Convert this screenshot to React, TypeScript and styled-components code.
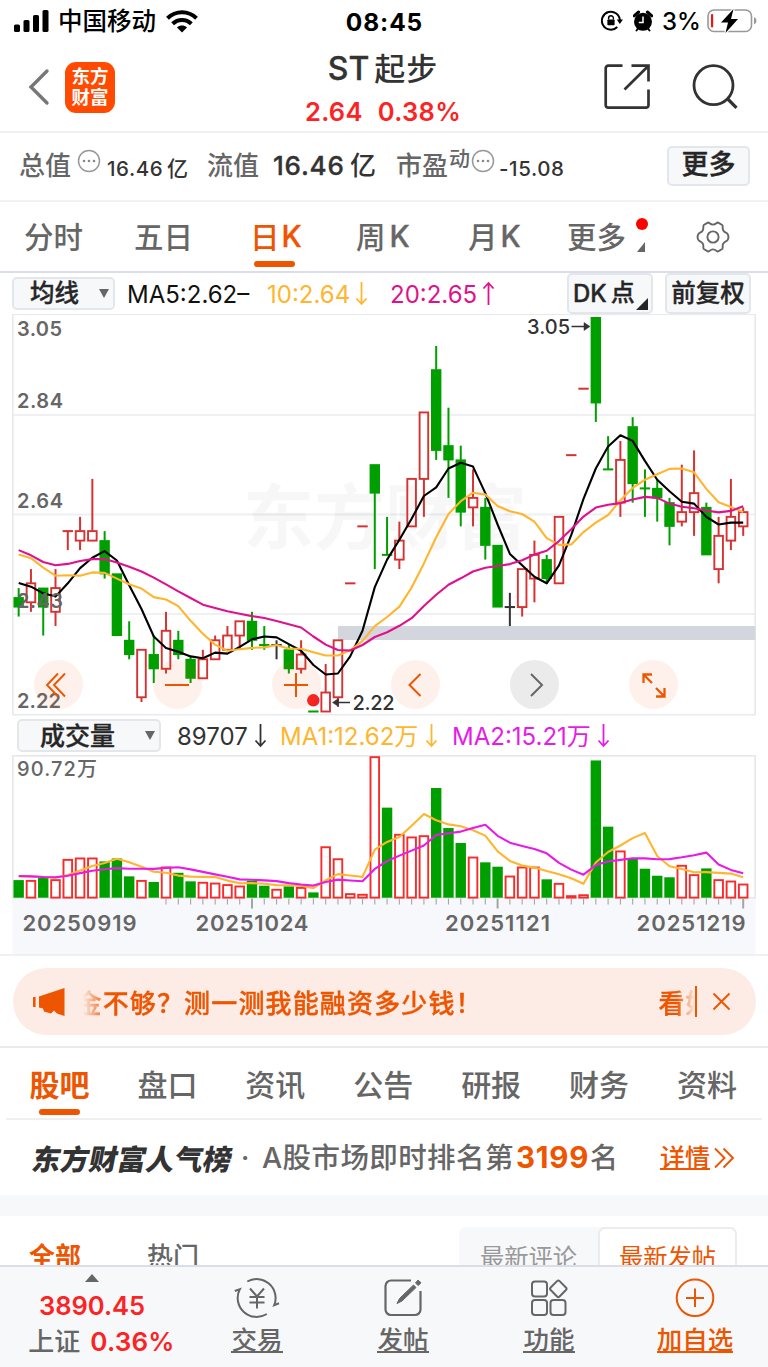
import React from 'react';
import styled, { createGlobalStyle, css } from 'styled-components';

const GlobalStyle = createGlobalStyle`
  * { box-sizing: border-box; }
  html, body { margin: 0; padding: 0; background: #fff; }
  body {
    width: 768px;
    height: 1367px;
    overflow: hidden;
    font-family: Inter, "Noto Sans CJK SC", sans-serif;
    color: #333;
    -webkit-font-smoothing: antialiased;
  }
  svg { display: block; flex: none; }
`;

const ORANGE = '#ee5500';
const GREY = '#666666';
const RED = '#fb2323';

const Screen = styled.div`
  width: 768px;
  height: 1367px;
  display: flex;
  flex-direction: column;
  overflow: hidden;
  background: #fff;
`;

interface LabelProps {
  $size: number;
  $weight?: number;
  $color?: string;
  $gap?: number;
  $spacing?: number;
  $drop?: number;
  $rise?: number;
  $width?: number;
  $heavy?: boolean;
}

const Label = styled.span<LabelProps>`
  flex: none;
  font-size: ${p => p.$size}px;
  line-height: 1.2;
  font-weight: ${p => p.$weight ?? 'inherit'};
  color: ${p => p.$color ?? 'inherit'};
  margin-left: ${p => p.$gap ?? 0}px;
  letter-spacing: ${p => p.$spacing ?? 0}px;
  padding-top: ${p => p.$drop ?? 0}px;
  padding-bottom: ${p => p.$rise ?? 0}px;
  white-space: nowrap;
  ${p => p.$heavy && css`-webkit-text-stroke: 0.35px currentColor;`}
  ${p => p.$width !== undefined && css`width: ${p.$width}px;`}
`;

/* ---------- status bar ---------- */

const StatusBar = styled.div`
  height: 43px;
  flex: none;
  display: grid;
  grid-template-columns: 1fr 90px 1fr;
  align-items: center;
  color: #000;
  padding: 0 10px 0 14px;
`;

const StatusSide = styled.div<{ $end?: boolean }>`
  display: flex;
  align-items: center;
  justify-content: ${p => (p.$end ? 'flex-end' : 'flex-start')};
`;

const StatusTime = styled.div`
  font-size: 24.5px;
  font-weight: 700;
  letter-spacing: 0.9px;
  padding-right: 3px;
  display: flex;
  justify-content: center;
  white-space: nowrap;
`;

const Spacer = styled.div<{ $w: number }>`
  flex: none;
  width: ${p => p.$w}px;
`;

/* ---------- header ---------- */

const Header = styled.header`
  height: 90px;
  flex: none;
  display: flex;
  align-items: center;
  justify-content: space-between;
  border-bottom: 2px solid #efefef;
  padding: 0 30px 0 28px;
`;

const HeaderSide = styled.div<{ $gap: number }>`
  width: 170px;
  display: flex;
  align-items: center;
  gap: ${p => p.$gap}px;

  &:last-child { justify-content: flex-end; }
`;

const AppLogo = styled.div`
  width: 50px;
  height: 51px;
  border-radius: 11px;
  background: #ff4a00;
  color: #fff;
  font-size: 18.5px;
  line-height: 21px;
  font-weight: 700;
  display: flex;
  flex-direction: column;
  align-items: center;
  justify-content: center;
`;

const TitleBlock = styled.div`
  display: flex;
  flex-direction: column;
  align-items: center;
  padding-top: 4px;
`;

const StockName = styled.div`
  display: flex;
  align-items: center;
  height: 44px;
  color: #333;
  font-weight: 500;
`;

const StockQuote = styled.div`
  display: flex;
  align-items: center;
  height: 40px;
  color: ${RED};
  font-size: 25.5px;
  font-weight: 600;
  letter-spacing: 0.3px;
  gap: 15px;
`;

/* ---------- statistics row ---------- */

const StatsRow = styled.section`
  height: 69px;
  flex: none;
  display: flex;
  align-items: center;
  padding: 0 18px 2px 19px;
  border-bottom: 2px solid #f1f1f1;
  font-weight: 500;
`;

const NoteMark = styled.span`
  flex: none;
  padding-bottom: 9px;
`;

const SoftButton = styled.button<{ $w: number; $h: number }>`
  flex: none;
  width: ${p => p.$w}px;
  height: ${p => p.$h}px;
  padding: 0;
  border: 2px solid #e3e6ea;
  border-radius: 5px;
  background: #f7f8fa;
  color: #262626;
  font-family: inherit;
  font-weight: 500;
  display: flex;
  align-items: center;
  justify-content: center;
  white-space: nowrap;
`;

/* ---------- period tabs ---------- */

const PeriodTabs = styled.nav`
  height: 71px;
  flex: none;
  display: flex;
  align-items: stretch;
  padding-left: 24px;
  border-bottom: 2px solid #dadee8;
`;

const PeriodTab = styled.div<{ $w: number; $active?: boolean }>`
  flex: none;
  width: ${p => p.$w}px;
  display: flex;
  align-items: center;
  position: relative;
  padding-bottom: 4px;
  font-size: 29.5px;
  font-weight: 500;
  color: ${p => (p.$active ? ORANGE : GREY)};

  ${p => p.$active && css`
    &::after {
      content: '';
      position: absolute;
      left: 4px;
      bottom: 4px;
      width: 41px;
      height: 6px;
      border-radius: 3px;
      background: ${ORANGE};
    }
  `}
`;

const SettingsTab = styled.div`
  display: flex;
  align-items: center;
`;

const NewDot = styled.i`
  position: absolute;
  left: 68.5px;
  top: 16px;
  width: 12px;
  height: 12px;
  border-radius: 50%;
  background: #ff0000;
`;

const TabCorner = styled.i`
  position: absolute;
  left: 70px;
  top: 40px;
  border-left: 8px solid transparent;
  border-bottom: 10px solid ${GREY};
`;

/* ---------- indicator bars ---------- */

const IndicatorBar = styled.div<{ $h: number; $left: number }>`
  height: ${p => p.$h}px;
  flex: none;
  display: flex;
  align-items: center;
  padding: 0 17px 0 ${p => p.$left}px;
`;

const Select = styled(SoftButton)`
  justify-content: space-between;

  &::after {
    content: '';
    border: 5.5px solid transparent;
    border-top: 9px solid ${GREY};
    border-bottom: 0;
    margin-right: 4px;
  }
`;

const CornerButton = styled(SoftButton)`
  position: relative;
  justify-content: flex-start;
  padding-left: 4px;

  &::after {
    content: '';
    position: absolute;
    right: 3px;
    bottom: 2px;
    border-left: 12px solid transparent;
    border-bottom: 12px solid #262626;
  }
`;

const Push = styled.div`
  flex: 1;
`;

/* ---------- charts ---------- */

const PriceChart = styled.div`
  position: relative;
  height: 402px;
  flex: none;
`;

const ChartControls = styled.div`
  position: absolute;
  left: 33.5px;
  right: 89.5px;
  bottom: 7px;
  display: flex;
  justify-content: space-between;
`;

const RoundButton = styled.button<{ $muted?: boolean }>`
  width: 49px;
  height: 49px;
  padding: 0;
  border: 0;
  border-radius: 50%;
  background: ${p => (p.$muted ? 'rgba(0,0,0,0.08)' : 'rgba(240,90,20,0.085)')};
  color: ${p => (p.$muted ? GREY : ORANGE)};
  display: flex;
  align-items: center;
  justify-content: center;
`;

const VolumeChart = styled.div`
  height: 201px;
  flex: none;
  border-bottom: 2px solid #eff0f1;
`;

/* ---------- promo banner ---------- */

const BannerWrap = styled.div`
  height: 92px;
  flex: none;
  padding: 12px 12.5px 0;
  border-bottom: 2px solid #e9eaec;
`;

const Banner = styled.div`
  height: 67px;
  border-radius: 34px;
  background: #fdece5;
  color: ${ORANGE};
  display: flex;
  align-items: center;
  padding: 0 24px 0 20px;
`;

const Ticker = styled.div`
  flex: none;
  width: 614px;
  margin-left: 16px;
  overflow: hidden;
  display: flex;
  font-size: 26px;
  font-weight: 500;
  letter-spacing: 1.15px;
  white-space: nowrap;
  -webkit-text-stroke: 0.35px currentColor;
  mask-image: linear-gradient(90deg, transparent 2px, #000 26px, #000 calc(100% - 18px), transparent 100%);
`;

const TickerText = styled.span<{ $shift: number; $w: number }>`
  flex: none;
  width: ${p => p.$w}px;
  margin-left: ${p => p.$shift}px;
`;

const BannerRule = styled.div`
  width: 2px;
  height: 31px;
  margin: 0 15px 0 0;
  background: ${ORANGE};
`;

/* ---------- content tabs ---------- */

const ContentTabs = styled.nav`
  height: 72px;
  flex: none;
  margin: 0 6px;
  padding: 0 25px 0 23.5px;
  display: flex;
  justify-content: space-between;
  border-bottom: 2px solid #efefef;
`;

const ContentTab = styled.div<{ $active?: boolean }>`
  width: 60px;
  height: 70px;
  padding-top: 19px;
  font-size: 30px;
  line-height: 36px;
  font-weight: ${p => (p.$active ? 700 : 500)};
  color: ${p => (p.$active ? ORANGE : GREY)};
  white-space: nowrap;

  ${p => p.$active && css`
    &::after {
      content: '';
      display: block;
      width: 41px;
      height: 6px;
      margin: 6px auto 0;
      border-radius: 3px;
      background: ${ORANGE};
    }
  `}
`;

const RankRow = styled.section`
  height: 75px;
  flex: none;
  display: flex;
  align-items: center;
  padding-left: 33px;
  color: ${GREY};
`;

const RankBrand = styled.span`
  flex: none;
  width: 205px;
  font-size: 28.5px;
  font-weight: 900;
  color: #333;
  transform: skewX(-11deg);
  white-space: nowrap;
`;

const Underlined = styled.span<{ $size: number }>`
  flex: none;
  font-size: ${p => p.$size}px;
  line-height: ${p => p.$size - 5}px;
  font-weight: 500;
  border-bottom: 2px solid currentColor;
  white-space: nowrap;
`;

const DetailLink = styled.div`
  display: flex;
  align-items: center;
  gap: 4px;
  color: ${ORANGE};

  ${Underlined} { margin-top: 3px; }
`;

const Band = styled.div`
  height: 21px;
  flex: none;
  background: #f7f8fa;
`;

const FilterRow = styled.section`
  height: 49px;
  flex: none;
  display: flex;
  align-items: flex-start;
  padding: 11px 31px 0 29px;
  overflow: hidden;
`;

const Segmented = styled.div`
  flex: none;
  display: flex;
  width: 278px;
  height: 60px;
  border-radius: 7px;
  background: #f7f8fa;
`;

const Segment = styled.div<{ $active?: boolean }>`
  width: 139px;
  height: 60px;
  padding-top: 13px;
  border: 2px solid ${p => (p.$active ? '#ececee' : 'transparent')};
  border-radius: 7px;
  background: ${p => (p.$active ? '#fff' : 'transparent')};
  color: ${p => (p.$active ? ORANGE : '#999')};
  font-size: 24.3px;
  line-height: 30px;
  text-align: center;
  white-space: nowrap;
`;

/* ---------- bottom bar ---------- */

const BottomBar = styled.footer`
  height: 102px;
  flex: none;
  display: flex;
  background: #f7f8fa;
  border-top: 2px solid #dadee6;
  color: ${GREY};
`;

const IndexBox = styled.div`
  width: 184px;
  display: flex;
  flex-direction: column;
  align-items: center;
  padding-top: 7px;
`;

const UpMark = styled.i`
  border: 7.5px solid transparent;
  border-top: 0;
  border-bottom: 8px solid ${GREY};
`;

const IndexLine = styled.div<{ $h: number; $indent?: number }>`
  height: ${p => p.$h}px;
  display: flex;
  align-items: center;
  padding-left: ${p => p.$indent ?? 0}px;
  color: ${GREY};
  font-weight: 500;
  white-space: nowrap;
`;

const NavItem = styled.div<{ $hot?: boolean }>`
  width: 146px;
  display: flex;
  flex-direction: column;
  align-items: center;
  gap: 12px;
  padding-top: 11px;
  color: ${p => (p.$hot ? ORANGE : GREY)};
`;

/* ---------- market data ---------- */

type Tone = 'up' | 'down' | 'flat';

// [tone, high, low, body top, body bottom, volume]; prices in cents, volume in 万
const DAYS: [Tone, number, number, number, number, number][] = [
  ['down', 248, 242, 246, 244, 11.3],
  ['up', 252, 243, 249, 245, 11.3],
  ['down', 248, 238, 248, 244, 13.3],
  ['up', 252, 240, 248, 243, 11.8],
  ['up', 260, 256, 260, 260, 24.8],
  ['up', 263, 256, 260, 258, 25.7],
  ['up', 271, 258, 260, 258, 25.7],
  ['down', 260, 250, 258, 251, 23.3],
  ['down', 251, 238, 251, 238, 25.2],
  ['down', 241, 233, 237, 234, 13.7],
  ['up', 235, 224, 235, 225, 11.3],
  ['down', 238, 228, 234, 231, 10.1],
  ['up', 243, 230, 239, 231, 19.9],
  ['down', 239, 233, 237, 234, 16.0],
  ['down', 233.6, 228, 233, 229, 10.5],
  ['up', 235, 229, 233, 229, 10.1],
  ['up', 238, 233, 237, 233, 9.6],
  ['up', 240, 235, 238, 235, 8.6],
  ['up', 241, 235, 241, 238, 7.7],
  ['down', 243, 235, 241, 237, 10.9],
  ['down', 240, 235, 236, 236, 7.7],
  ['flat', 237, 233, 236, 236, 5.6],
  ['down', 236, 230, 235, 231, 7.3],
  ['up', 237, 230, 234, 231, 6.8],
  ['down', 222, 222, 222, 222, 3.4],
  ['up', 232, 222, 226, 222, 32.9],
  ['up', 237, 223, 237, 225, 25.2],
  ['up', 249, 249, 249, 249, 2.8],
  ['up', 261, 261, 261, 261, 2.4],
  ['up', 274, 252, 274, 268, 90.72],
  ['down', 263, 255, 255, 255, 57.8],
  ['up', 262, 252, 258, 254, 40.9],
  ['up', 271, 261, 271, 261, 39.2],
  ['up', 285, 263, 285, 271, 40.0],
  ['down', 299, 275, 294, 277, 70.4],
  ['down', 286, 267, 278, 275, 44.7],
  ['down', 278, 261, 275, 264, 35.1],
  ['up', 273, 261, 267, 265, 26.3],
  ['down', 267, 254, 265, 257, 22.7],
  ['down', 257, 244, 257, 244, 19.9],
  ['flat', 247, 240, 244, 244, 14.1],
  ['up', 252, 242, 252, 244, 19.9],
  ['up', 258, 245, 255, 250, 19.9],
  ['down', 255, 249, 254, 250, 11.8],
  ['up', 263, 249, 263, 249, 9.4],
  ['up', 276, 276, 276, 276, 1.5],
  ['up', 290, 290, 290, 290, 2.1],
  ['down', 305, 283, 305, 287, 88.1],
  ['down', 280, 273, 273, 273, 45.6],
  ['up', 279, 263, 275, 266, 30.2],
  ['down', 284, 266, 282, 270, 25.2],
  ['down', 273, 263, 269, 269, 18.6],
  ['down', 271, 262, 269, 267, 14.1],
  ['down', 267, 257, 266, 261, 13.1],
  ['up', 274, 261, 264, 262, 21.0],
  ['up', 277, 259, 268, 264, 15.0],
  ['down', 266, 255, 265, 255, 18.8],
  ['up', 263, 249, 259, 252, 11.8],
  ['up', 271, 256, 263, 258, 10.9],
  ['up', 265, 259, 264, 261, 8.97],
];

// The gap-up day whose price body is green while its volume column is red.
const REVERSED_DAY = 29;

const dayX = (i: number) => 18.67 + i * 12.28;
const priceY = (cents: number) => 317.5 + (305 - cents) * 4.747;
const volumeY = (v: number) => 897.7 - v * 1.558;

const closes = DAYS.map((d, i) => (d[0] === 'up' && i !== REVERSED_DAY ? d[3] : d[4]));
const volumes = DAYS.map(d => d[5]);

const MA5_HEAD = [249.1, 248.3, 246.9, 246.2];
const MA10_HEAD = [255.1, 254.3, 252.3, 250.6, 250.7, 250.6, 251.3, 251.2, 250.0];
const MA20_HEAD = [
  256, 254.9, 253.5, 252.8, 253.1, 253.7, 254.1, 254.1, 253.4, 252.5,
  251.5, 250.2, 248.8, 247.3, 245.9, 244.5, 243.8, 243.1, 242.6,
];
const VOL5_HEAD = [13.7, 13.7, 13.3, 12.8];
const VOL10_HEAD = [13.9, 13.7, 13.3, 13.1, 14.1, 15.8, 17.3, 18.2, 19.0];

function averageLine(values: number[], head: number[], toY: (v: number) => number) {
  const span = head.length + 1;
  return values
    .map((_, i) => {
      const v = i < head.length
        ? head[i]
        : values.slice(i - span + 1, i + 1).reduce((a, b) => a + b, 0) / span;
      return `${dayX(i).toFixed(1)},${toY(v).toFixed(1)}`;
    })
    .join(' ');
}

const TONES: Record<Tone, string> = { up: '#d63232', down: '#009f00', flat: '#333333' };

function Candle({ index }: { index: number }) {
  const [rawTone, high, low, top, bottom] = DAYS[index];
  const tone = index === REVERSED_DAY ? 'down' : rawTone;
  const color = TONES[tone];
  const x = dayX(index);
  const yTop = priceY(top);
  const yBottom = priceY(bottom);
  const wickTop = priceY(high);
  const wickBottom = priceY(low);
  return (
    <g stroke={color} strokeWidth={2} fill="none">
      {high > top && <path d={`M${x} ${wickTop}V${yTop}`} />}
      {low < bottom && <path d={`M${x} ${yBottom}V${wickBottom}`} />}
      {top === bottom && <path d={`M${x - 5.2} ${yTop}H${x + 5.2}`} />}
      {top > bottom && tone === 'down' && (
        <rect x={x - 5.2} y={yTop - 0.5} width={10.4} height={yBottom - yTop + 1} fill={color} stroke="none" />
      )}
      {top > bottom && tone === 'up' && (
        <rect x={x - 4.3} y={yTop} width={8.6} height={yBottom - yTop} strokeWidth={1.9} />
      )}
    </g>
  );
}

function PriceSvg() {
  return (
    <svg width="768" height="402" viewBox="0 314 768 402" fontFamily='Inter, "Noto Sans CJK SC", sans-serif'>
      <g stroke="#eef0f4" strokeWidth="2">
        <path d="M13 415H755M13 514.5H755M13 614H755" />
      </g>
      <rect x="12.8" y="314.3" width="742.4" height="400.4" fill="none" stroke="#e9eaed" strokeWidth="1.6" />
      <text x="243" y="543" fontSize="71" fontWeight="700" fill="#000" fillOpacity="0.03" textLength="284">东方财富</text>
      <rect x="338" y="626" width="417.5" height="14" fill="#d3d6dc" />
      {DAYS.map((_, i) => <Candle key={i} index={i} />)}
      <g fill="none" strokeWidth="2.1" strokeLinejoin="round">
        <polyline points={averageLine(closes, MA5_HEAD, priceY)} stroke="#000" />
        <polyline points={averageLine(closes, MA10_HEAD, priceY)} stroke="#ffb52e" />
        <polyline points={averageLine(closes, MA20_HEAD, priceY)} stroke="#e0118a" />
      </g>
      <circle cx="313.3" cy="700.3" r="6.2" fill="#f52222" />
      <g fill={GREY} fontSize="20" fontWeight="600">
        <text x="17" y="336.3" textLength="45">3.05</text>
        <text x="17" y="407.8" textLength="46">2.84</text>
        <text x="17" y="508.3" textLength="46">2.64</text>
        <text x="17" y="607.8" textLength="46">2.43</text>
        <text x="17" y="707.8" textLength="44">2.22</text>
      </g>
      <g fill="#333" fontSize="20" fontWeight="500">
        <text x="527" y="333.8" textLength="43">3.05</text>
        <text x="352.5" y="709.8" textLength="42">2.22</text>
      </g>
      <g stroke="#333" strokeWidth="1.5" fill="#333">
        <path d="M571.5 326.5H586" />
        <path d="M584 322.500L590 326.5L584 330.500Z" strokeWidth="0.5" />
        <path d="M350 702.5H336" />
        <path d="M338.5 698.500L332.5 702.5L338.5 706.500Z" strokeWidth="0.5" />
      </g>
    </svg>
  );
}

function VolumeSvg() {
  return (
    <svg width="768" height="199" viewBox="0 755 768 199" fontFamily='Inter, "Noto Sans CJK SC", sans-serif'>
      <rect x="12.5" y="898" width="743" height="56" fill="#f7f8fb" />
      <rect x="12.8" y="755.8" width="742.4" height="142" fill="none" stroke="#e6e7ea" strokeWidth="1.6" />
      <text x="17" y="775.5" fontSize="20" fontWeight="500" fill={GREY} textLength="80">90.72万</text>
      {DAYS.map(([tone, , , , , volume], i) => {
        const x = dayX(i);
        const y = volumeY(volume);
        return tone === 'down' ? (
          <rect key={i} x={x - 5.2} y={y} width={10.4} height={897.7 - y} fill="#009f00" />
        ) : (
          <rect key={i} x={x - 4.3} y={y + 0.8} width={8.6} height={Math.max(896.8 - y, 0.6)} fill="none" stroke="#f72b2b" strokeWidth="1.9" />
        );
      })}
      <g fill="none" strokeWidth="2.1" strokeLinejoin="round">
        <polyline points={averageLine(volumes, VOL5_HEAD, volumeY)} stroke="#ffb52e" />
        <polyline points={averageLine(volumes, VOL10_HEAD, volumeY)} stroke="#e71be7" />
      </g>
      <g stroke="#a5a5a5">
        {DAYS.map((_, i) => {
          if (i < 12) return null;
          const major = i % 20 === 19;
          return <path key={i} d={`M${dayX(i)} 898.5V${major ? 908.5 : 904.5}`} strokeWidth={major ? 2 : 1.1} />;
        })}
      </g>
      <g fill={GREY} fontSize="22" fontWeight="600">
        <text x="22.5" y="930.5" textLength="114">20250919</text>
        <text x="195.5" y="930.5" textLength="113">20251024</text>
        <text x="445" y="930.5" textLength="105">20251121</text>
        <text x="636.5" y="930.5" textLength="109">20251219</text>
      </g>
    </svg>
  );
}

/* ---------- icons ---------- */

const SignalIcon = () => (
  <svg width="35" height="23" viewBox="0 0 35 23" fill="#000">
    <rect x="0" y="14.5" width="6" height="7.5" rx="1.6" />
    <rect x="9.5" y="10" width="6" height="12" rx="1.6" />
    <rect x="19" y="5" width="6" height="17" rx="1.6" />
    <rect x="28.5" y="0" width="6" height="22" rx="1.6" />
  </svg>
);

const WifiIcon = () => (
  <svg width="32" height="23" viewBox="0 0 32 23" fill="none" stroke="#000" strokeWidth="4">
    <path d="M1.5 8.2C9.8 0.2 22.2 0.2 30.5 8.2" />
    <path d="M6.6 13.8C12 8.6 20 8.6 25.4 13.8" />
    <path d="M16 22.4L11 17.4C13.8 15 18.2 15 21 17.4Z" fill="#000" stroke="none" />
  </svg>
);

const RotationLockIcon = () => (
  <svg width="22" height="22" viewBox="0 0 22 22" fill="none" stroke="#000" strokeWidth="2">
    <path d="M18.9 10.5A9 9 0 1 0 16.3 17" />
    <path d="M15.8 9.6H22L18.8 14Z" fill="#000" stroke="none" />
    <path d="M7.6 9.5V8.2A2.4 2.4 0 0 1 12.4 8.2V9.5" strokeWidth="1.4" />
    <rect x="6.4" y="9.4" width="7.2" height="5.8" rx="0.8" fill="#000" stroke="none" />
  </svg>
);

const AlarmIcon = () => (
  <svg width="20" height="22" viewBox="0 0 20 22">
    <path d="M1.2 5.8L5.6 2M18.8 5.8L14.4 2" stroke="#000" strokeWidth="3" strokeLinecap="round" />
    <path d="M3.5 20.5L5.5 18M16.5 20.5L14.5 18" stroke="#000" strokeWidth="2" strokeLinecap="round" />
    <circle cx="10" cy="11.8" r="9" fill="#000" />
    <path d="M10 6.6V12.4H5.8" fill="none" stroke="#fff" strokeWidth="1.5" />
  </svg>
);

const BatteryIcon = () => (
  <svg width="51" height="26" viewBox="0 0 51 26">
    <rect x="1" y="2" width="43.5" height="21.5" rx="6" fill="none" stroke="#999" strokeWidth="1.6" />
    <path d="M47 9C50.2 10.3 50.2 15.1 47 16.5Z" fill="#999" />
    <rect x="4" y="6" width="2.2" height="13.4" rx="1" fill="#f01414" />
    <path d="M26.5 1L14 14.5H21L18.5 25L31 11H24Z" fill="#000" stroke="#fff" strokeWidth="2.4" paintOrder="stroke" />
  </svg>
);

const BackIcon = () => (
  <svg width="22" height="38" viewBox="0 0 22 38" fill="none" stroke="#777" strokeWidth="3.4" strokeLinecap="round">
    <path d="M19 3L3 19L19 35" />
  </svg>
);

const ShareIcon = () => (
  <svg width="46" height="46" viewBox="0 0 46 46" fill="none" stroke="#333" strokeWidth="2.7">
    <path d="M18.5 1.7H4.2A2.5 2.5 0 0 0 1.7 4.2V41.2A2.5 2.5 0 0 0 4.2 43.7H42A2.5 2.5 0 0 0 44.5 41.2V25.5" />
    <path d="M27.5 1.7H44.5V17.5M44.5 1.7L20.500 25.5" />
  </svg>
);

const SearchIcon = () => (
  <svg width="46" height="46" viewBox="0 0 46 46" fill="none" stroke="#333" strokeWidth="2.8">
    <circle cx="21.5" cy="21.2" r="19.5" />
    <path d="M34.8 34L44.5 43.8" strokeWidth="3.2" />
  </svg>
);

const MoreCircle = () => (
  <svg width="24" height="24" viewBox="0 0 24 24">
    <circle cx="12" cy="12" r="10.5" fill="none" stroke="#999" strokeWidth="1.5" />
    <circle cx="7" cy="12" r="1.3" fill="#888" />
    <circle cx="12" cy="12" r="1.3" fill="#888" />
    <circle cx="17" cy="12" r="1.3" fill="#888" />
  </svg>
);

const GearIcon = () => (
  <svg width="34" height="34" viewBox="0 0 34 34" fill="none" stroke="#666" strokeWidth="1.9" strokeLinejoin="round">
    <path d="M11.8 2.6C13.5 2.2 13.8 4.6 17 4.6S20.5 2.2 22.2 2.6L26.2 5C27.4 6 25.8 7.9 27.3 10.4S30.9 12.3 31.8 14.3C32.6 16 32.6 18 31.8 19.7C30.9 21.7 28.8 21.1 27.3 23.6S27.4 28 26.2 29L22.2 31.4C20.5 31.8 20.2 29.4 17 29.4S13.5 31.8 11.8 31.4L7.8 29C6.6 28 8.2 26.1 6.7 23.6S3.1 21.7 2.2 19.7C1.4 18 1.4 16 2.2 14.3C3.1 12.3 5.2 12.900 6.7 10.4S6.6 6 7.8 5Z" />
    <circle cx="17" cy="17" r="5.6" />
  </svg>
);

const Arrow = ({ up, color }: { up?: boolean; color: string }) => (
  <svg width="13" height="25" viewBox="0 0 13 25" fill="none" stroke={color} strokeWidth="1.8">
    {up ? <path d="M6.5 24V2M1.5 7.5L6.5 2L11.5 7.5" /> : <path d="M6.5 1V23M1.5 17.5L6.5 23L11.5 17.5" />}
  </svg>
);

const ControlIcon = ({ d, weight = 2 }: { d: string; weight?: number }) => (
  <svg width="30" height="30" viewBox="0 0 30 30" fill="none" stroke="currentColor" strokeWidth={weight}>
    <path d={d} />
  </svg>
);

const HornIcon = () => (
  <svg width="32" height="28" viewBox="0 0 32 28" fill={ORANGE}>
    <rect x="0" y="9" width="2.6" height="10" />
    <path d="M6 8.5L31.5 0V28L24 25.5L21 22.5L18 25.5L11 23.5L10 20.5L6 19.5Z" />
  </svg>
);

const CloseIcon = () => (
  <svg width="19" height="19" viewBox="0 0 19 19" stroke={ORANGE} strokeWidth="1.9">
    <path d="M1.5 1.5L17.5 17.5M17.5 1.5L1.5 17.5" />
  </svg>
);

const DoubleChevron = () => (
  <svg width="21" height="22" viewBox="0 0 21 22" fill="none" stroke={ORANGE} strokeWidth="1.9">
    <path d="M1 1.5L10.5 11L1 20.5M9.5 1.5L19 11L9.5 20.5" />
  </svg>
);

const TradeIcon = () => (
  <svg width="46" height="40" viewBox="0 0 46 40" fill="none" stroke="#666" strokeWidth="2">
    <path d="M13.3 3.5A19 19 0 0 1 40.2 27.2L45 25.3" />
    <path d="M32.8 36A19 19 0 0 1 5.8 11.200L0.800 13" />
    <path d="M16 10.500L23 18.500L30 10.500M23 18.500V30.5M15.5 19H30.500M15.5 24.500H30.500" />
  </svg>
);

const PostIcon = () => (
  <svg width="38" height="40" viewBox="0 0 38 40" fill="none" stroke="#666" strokeWidth="2.2">
    <path d="M27 2.5H7A5.5 5.5 0 0 0 1.5 8V31.5A5.5 5.5 0 0 0 7 37H31A5.5 5.5 0 0 0 36.5 31.5V13" />
    <path d="M13 25.5L15.5 20.5L29.5 7L32 9.5L18 23Z" fill="#666" strokeWidth="1" />
    <path d="M31.5 5L34 2L37 4.8L34.3 7.6Z" fill="#666" strokeWidth="1" />
  </svg>
);

const FunctionIcon = () => (
  <svg width="38" height="40" viewBox="0 0 38 40" fill="none" stroke="#666" strokeWidth="2">
    <rect x="2" y="3.5" width="15" height="15" rx="3" />
    <rect x="2" y="22" width="15" height="15" rx="3" />
    <rect x="20.5" y="22" width="15" height="15" rx="3" />
    <rect x="22" y="4.5" width="12.6" height="12.6" rx="1.8" transform="rotate(45 28.3 10.8)" />
  </svg>
);

const AddIcon = () => (
  <svg width="40" height="40" viewBox="0 0 40 40" fill="none" stroke={ORANGE} strokeWidth="2">
    <circle cx="20" cy="19.800" r="18.3" />
    <path d="M20 10.500V29M11 20H29" />
  </svg>
);

const CONTENT_TABS = ['股吧', '盘口', '资讯', '公告', '研报', '财务', '资料'];

export default function App() {
  return (
    <Screen>
      <GlobalStyle />

      <StatusBar>
        <StatusSide>
          <SignalIcon />
          <Label $size={24.5} $weight={500} $gap={9}>中国移动</Label>
          <Spacer $w={10} />
          <WifiIcon />
        </StatusSide>
        <StatusTime>08:45</StatusTime>
        <StatusSide $end>
          <RotationLockIcon />
          <Spacer $w={10} />
          <AlarmIcon />
          <Label $size={24} $weight={500} $gap={9} $width={45} $drop={2}>3%</Label>
          <BatteryIcon />
        </StatusSide>
      </StatusBar>

      <Header>
        <HeaderSide $gap={15}>
          <BackIcon />
          <AppLogo>
            <span>东方</span>
            <span>财富</span>
          </AppLogo>
        </HeaderSide>
        <TitleBlock>
          <StockName>
            <Label $size={32} $heavy>ST</Label>
            <Label $size={31} $gap={5} $spacing={1}>起步</Label>
          </StockName>
          <StockQuote>
            <span>2.64</span>
            <span>0.38%</span>
          </StockQuote>
        </TitleBlock>
        <HeaderSide $gap={42}>
          <ShareIcon />
          <SearchIcon />
        </HeaderSide>
      </Header>

      <StatsRow>
        <Label $size={26} $color={GREY} $width={58}>总值</Label>
        <NoteMark><MoreCircle /></NoteMark>
        <Label $size={20.5} $spacing={0.6} $drop={7} $gap={6} $width={60}>16.46</Label>
        <Label $size={21} $drop={6} $width={40}>亿</Label>
        <Label $size={26} $color={GREY} $width={66}>流值</Label>
        <Label $size={26} $spacing={0.8} $width={77} $heavy>16.46</Label>
        <Label $size={26} $width={46}>亿</Label>
        <Label $size={26} $color={GREY} $width={53}>市盈</Label>
        <Label $size={21} $color={GREY} $width={22} $rise={14}>动</Label>
        <NoteMark><MoreCircle /></NoteMark>
        <Label $size={20.5} $spacing={0.6} $drop={7} $gap={4}>-15.08</Label>
        <Push />
        <SoftButton $w={83} $h={40}>
          <Label $size={27} $heavy>更多</Label>
        </SoftButton>
      </StatsRow>

      <PeriodTabs>
        <PeriodTab $w={110}>分时</PeriodTab>
        <PeriodTab $w={116}>五日</PeriodTab>
        <PeriodTab $w={106} $active>日<Label $size={29.5} $gap={2} $drop={4} $heavy>K</Label></PeriodTab>
        <PeriodTab $w={112}>周<Label $size={29.5} $gap={4} $drop={4} $heavy>K</Label></PeriodTab>
        <PeriodTab $w={99}>月<Label $size={29.5} $gap={3} $drop={4} $heavy>K</Label></PeriodTab>
        <PeriodTab $w={129}>
          更多
          <NewDot />
          <TabCorner />
        </PeriodTab>
        <SettingsTab><GearIcon /></SettingsTab>
      </PeriodTabs>

      <IndicatorBar $h={41} $left={12}>
        <Select $w={103} $h={33}><Label $size={24.5} $gap={16} $heavy>均线</Label></Select>
        <Label $size={24} $color="#111" $gap={12} $drop={3} $width={140}>MA5:2.62–</Label>
        <Label $size={24} $color="#ffb52e" $drop={3} $width={88}>10:2.64</Label>
        <Arrow color="#ffb52e" />
        <Label $size={24} $color="#e0118a" $gap={22} $drop={3} $width={92}>20:2.65</Label>
        <Arrow up color="#e0118a" />
        <Push />
        <CornerButton $w={86} $h={41}>
          <Label $size={24} $drop={2} $heavy>DK</Label>
          <Label $size={24} $gap={4} $heavy>点</Label>
        </CornerButton>
        <Spacer $w={12} />
        <SoftButton $w={86} $h={41}><Label $size={24.5} $heavy>前复权</Label></SoftButton>
      </IndicatorBar>

      <PriceChart>
        <PriceSvg />
        <ChartControls>
          <RoundButton><ControlIcon weight={1.9} d="M15 3.5L4 15L15 26.5M22 3.5L11 15L22 26.5" /></RoundButton>
          <RoundButton><ControlIcon d="M3 15H27" /></RoundButton>
          <RoundButton><ControlIcon d="M3 15H27M15 3V27" /></RoundButton>
          <RoundButton><ControlIcon d="M19.5 4L8.5 15L19.5 26" /></RoundButton>
          <RoundButton $muted><ControlIcon d="M11 4L22 15L11 26" /></RoundButton>
          <RoundButton><ControlIcon weight={2.3} d="M4.5 13V4.5H13M4.5 4.5L13 13M17 26.5H25.5V18M25.5 26.5L17 18" /></RoundButton>
        </ChartControls>
      </PriceChart>

      <IndicatorBar $h={39} $left={17}>
        <Select $w={144} $h={33}><Label $size={25} $gap={21} $heavy>成交量</Label></Select>
        <Label $size={24} $gap={16} $drop={3} $width={77}>89707</Label>
        <Arrow color="#333" />
        <Label $size={24} $color="#ffb52e" $gap={13} $drop={3} $width={145}>MA1:12.62万</Label>
        <Arrow color="#ffb52e" />
        <Label $size={24} $color="#e71be7" $gap={14} $drop={3} $width={145}>MA2:15.21万</Label>
        <Arrow color="#e71be7" />
      </IndicatorBar>

      <VolumeChart>
        <VolumeSvg />
      </VolumeChart>

      <BannerWrap>
        <Banner>
          <HornIcon />
          <Ticker>
            <TickerText $shift={-5} $w={583}>金不够？测一测我能融资多少钱！</TickerText>
            <TickerText $shift={0} $w={60}>看好</TickerText>
          </Ticker>
          <BannerRule />
          <CloseIcon />
        </Banner>
      </BannerWrap>

      <ContentTabs>
        {CONTENT_TABS.map((name, i) => (
          <ContentTab key={name} $active={i === 0}>{name}</ContentTab>
        ))}
      </ContentTabs>

      <RankRow>
        <RankBrand>东方财富人气榜</RankBrand>
        <Label $size={26} $weight={600} $gap={3} $width={21}>·</Label>
        <Label $size={28.5} $weight={500} $spacing={0.4} $drop={2} $width={254}>A股市场即时排名第</Label>
        <Label $size={29.5} $weight={700} $color={ORANGE} $spacing={0.8} $width={74}>3199</Label>
        <Label $size={28} $weight={500} $drop={2} $width={70}>名</Label>
        <DetailLink>
          <Underlined $size={25}>详情</Underlined>
          <DoubleChevron />
        </DetailLink>
      </RankRow>

      <Band />

      <FilterRow>
        <Label $size={26} $weight={700} $color={ORANGE} $drop={14} $width={118}>全部</Label>
        <Label $size={26} $weight={500} $color={GREY} $drop={14}>热门</Label>
        <Push />
        <Segmented>
          <Segment>最新评论</Segment>
          <Segment $active>最新发帖</Segment>
        </Segmented>
      </FilterRow>

      <BottomBar>
        <IndexBox>
          <UpMark />
          <IndexLine $h={48}>
            <Label $size={25.5} $weight={600} $color={RED}>3890.45</Label>
          </IndexLine>
          <IndexLine $h={24} $indent={19}>
            <Label $size={26}>上证</Label>
            <Label $size={26} $weight={600} $color={RED} $gap={10} $spacing={0.2}>0.36%</Label>
          </IndexLine>
        </IndexBox>
        <NavItem><TradeIcon /><Underlined $size={25.5}>交易</Underlined></NavItem>
        <NavItem><PostIcon /><Underlined $size={25.5}>发帖</Underlined></NavItem>
        <NavItem><FunctionIcon /><Underlined $size={25.5}>功能</Underlined></NavItem>
        <NavItem $hot><AddIcon /><Underlined $size={25.5}>加自选</Underlined></NavItem>
      </BottomBar>
    </Screen>
  );
}
